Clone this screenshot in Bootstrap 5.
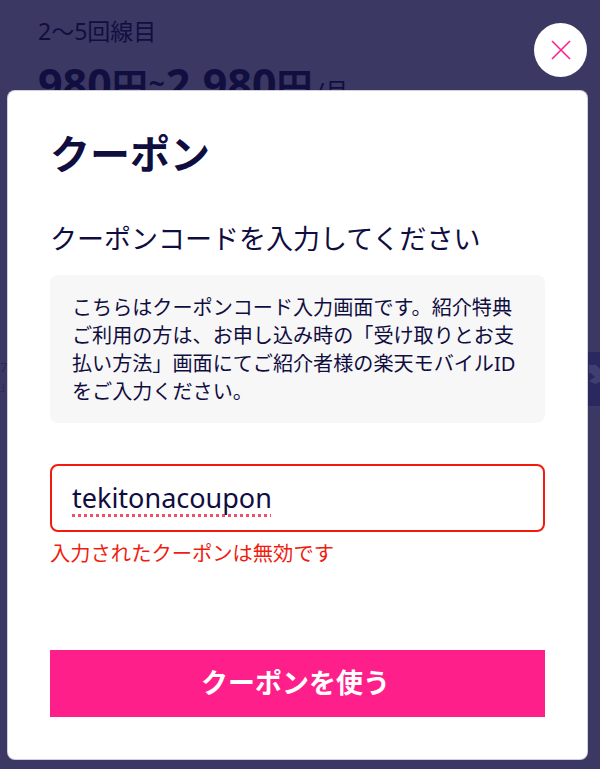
<!DOCTYPE html>
<html lang="ja">
<head>
<meta charset="utf-8">
<meta name="viewport" content="width=device-width, initial-scale=1">
<link rel="stylesheet" href="https://cdn.jsdelivr.net/npm/bootstrap@5.3.0/dist/css/bootstrap.min.css">
<style>
html,body{height:769px;overflow:hidden}
body{background:#3b3863;font-family:"Noto Sans","Noto Sans CJK JP",sans-serif;color:#100d3f;position:relative}
.bg-layer{padding:14px 38px 0;color:#110e40}
.bg-lines{font-size:23px;line-height:34px}
.bg-price{font-size:43px;line-height:52px;font-weight:700;margin-top:10px;white-space:nowrap}
.bg-price .yen{font-size:36px;line-height:1}
.bg-price .tilde{font-size:28px;line-height:1;margin:0 1px;vertical-align:6px}
.bg-price .per{font-size:24px;line-height:1;font-weight:400;margin-left:3px}
.edge-r{position:absolute;left:588px;top:352px}
.edge-l{position:absolute;left:0;top:358px;color:#2a2759}
.edge-l div{font-size:13px;line-height:19px}
.edge-l div+div{font-size:11px}
.close-disc{position:absolute;left:534px;top:23px;width:53px;height:54px;border-radius:50%;background:#fff;border:0;padding:0;display:flex;align-items:center;justify-content:center}
.sheet{position:absolute;left:8px;top:91px;width:579px;height:668px;background:#fff;border-radius:7px;padding:0 42px;box-shadow:0 0 0 1px #cfcedc}
.sheet-title{font-size:40px;font-weight:700;line-height:56px;margin:35px 0 0;color:#100d3f}
.sheet-sub{font-size:27px;line-height:38px;margin:38px 0 0;font-weight:400;color:#100d3f}
.note{margin-top:17px;height:148px;background:#f7f7f7;border-radius:8px;padding:19px 22px;font-size:20.1px;line-height:28px;color:#100d3f}
.code-input{height:68px;margin-top:41px;border:2px solid #f01c10;border-radius:8px;padding:0 20px;font-size:27px;color:#100d3f;background:#fff}
.code-text{text-decoration:underline dotted #f0506a 2.5px;text-underline-offset:6px;text-decoration-skip-ink:none}
.err{margin-top:7px;font-size:20.3px;line-height:29px;color:#f01c10}
.use-btn{display:block;width:100%;height:67px;margin-top:82px;padding:0 4px 0 0;background:#ff1f8a;border:0;border-radius:0;color:#fff;font-size:27px;font-weight:700}
.use-btn:hover{background:#ff1f8a;color:#fff}
</style>
</head>
<body>
<div class="bg-layer">
  <div class="bg-lines">2〜5回線目</div>
  <div class="bg-price">980<span class="yen">円</span><span class="tilde">~</span>2,980<span class="yen">円</span><span class="per">/月</span></div>
</div>
<div class="edge-l"><div>7</div><div>」</div></div>
<svg class="edge-r" width="12" height="54" viewBox="0 0 12 54"><rect width="12" height="54" fill="#2b2860"/><path d="M1 13 8 13 12 17 12 30 7 32 1 29 7 25 3 21 1 21Z" fill="#413e72"/></svg>
<button class="close-disc" type="button" aria-label="閉じる">
  <svg width="20" height="20" viewBox="0 0 20 20" fill="none" stroke="#ff1f8a" stroke-width="1.6"><path d="M1 1 19 19M19 1 1 19"/></svg>
</button>
<div class="sheet d-flex flex-column">
  <h1 class="sheet-title">クーポン</h1>
  <h2 class="sheet-sub">クーポンコードを入力してください</h2>
  <div class="note">こちらはクーポンコード入力画面です。紹介特典ご利用の方は、お申し込み時の「受け取りとお支払い方法」画面にてご紹介者様の楽天モバイルIDをご入力ください。</div>
  <div class="code-input d-flex align-items-center"><span class="code-text">tekitonacoupon</span></div>
  <div class="err">入力されたクーポンは無効です</div>
  <button class="use-btn btn" type="button">クーポンを使う</button>
</div>
<script src="https://cdn.jsdelivr.net/npm/bootstrap@5.3.0/dist/js/bootstrap.bundle.min.js"></script>
</body>
</html>
